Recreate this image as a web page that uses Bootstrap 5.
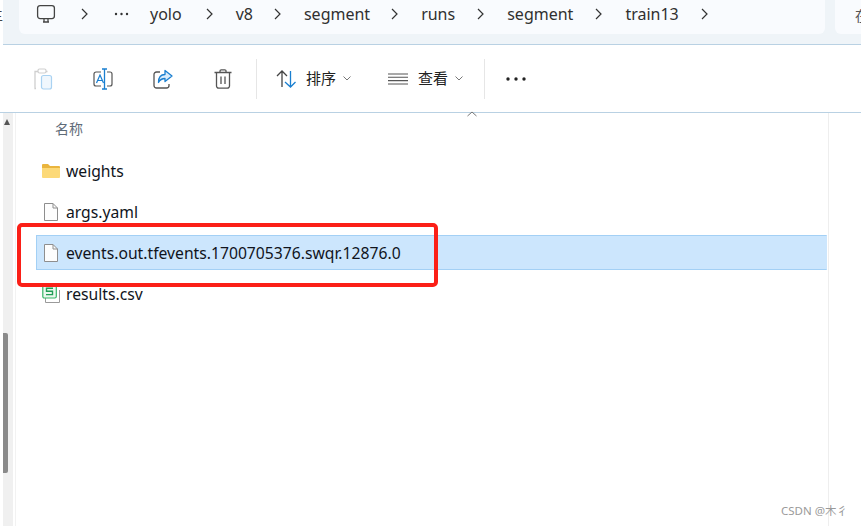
<!DOCTYPE html>
<html lang="zh-CN">
<head>
  <meta charset="UTF-8">
  <title>train13</title>
  <link rel="stylesheet" href="https://cdn.jsdelivr.net/npm/bootstrap@5.3.0/dist/css/bootstrap.min.css">
  <style>
    html, body {
      height: 100%;
      overflow: hidden;
    }

    body {
      position: relative;
      background: #fff;
      color: #1a1a1a;
      font-family: "Noto Sans", "Noto Sans CJK SC", sans-serif;
      font-size: 15.7px;
    }

    .addr-bar {
      height: 45px;
      margin-left: 3px;
      padding-left: 16px;
      background: #eff4f8;
      border-bottom: 1px solid #b9d1e3;
    }

    .addr-crumbs {
      flex: none;
      width: 806px;
      height: 34px;
      padding-left: 17px;
      padding-bottom: 6px;
      gap: 22px;
      background: #f9fbfe;
      border-radius: 0 0 6px 6px;
      color: #303030;
      font-size: 16px;
    }

    .crumb-pc {
      margin-right: 3px;
    }

    .crumb-dots {
      margin-left: 3px;
      margin-right: -1px;
    }

    .crumb-yolo {
      margin-right: 2px;
    }

    .crumb-v8 {
      margin-right: -1px;
    }

    .crumb-seg {
      margin-right: -1px;
    }

    .addr-search {
      height: 34px;
      margin-left: 10px;
      padding-left: 20px;
      padding-bottom: 4px;
      background: #f9fbfe;
      border-radius: 0 0 0 6px;
      overflow: hidden;
      color: #555;
      font-size: 14px;
      white-space: nowrap;
    }

    .tool-bar {
      height: 68px;
      padding-left: 13px;
      border-bottom: 1px solid #b9d1e3;
      font-size: 15px;
    }

    .tool-btn {
      width: 60px;
    }

    .tool-sep {
      flex: none;
      width: 1px;
      height: 40px;
      background: #e6e6e6;
    }

    .sep-first {
      margin-left: 3px;
      margin-right: 19px;
    }

    .sep-last {
      margin-left: 21px;
      margin-right: 21px;
    }

    .tool-menu {
      gap: 10px;
      color: #222;
    }

    .tool-menu + .tool-menu {
      margin-left: 37px;
    }

    .menu-caret {
      margin-left: -3px;
    }

    .main-wrap {
      height: 413px;
      padding-left: 3px;
    }

    .scroll-track {
      width: 10px;
      background: #f0f0f0;
    }

    .scroll-arrow {
      margin-top: 6px;
      margin-left: 1px;
      width: 0;
      height: 0;
      border-left: 3px solid transparent;
      border-right: 3px solid transparent;
      border-bottom: 6px solid #555;
    }

    .scroll-thumb {
      width: 5px;
      height: 140px;
      margin-top: 208px;
      background: #8a8a8a;
      border-radius: 0 2px 2px 0;
    }

    .file-pane {
      width: 814px;
      margin-left: 2px;
      border-left: 1px solid #f2f2f2;
      border-right: 1px solid #eee;
    }

    .sort-caret {
      top: -2px;
      left: 451px;
    }

    .col-name {
      height: 30px;
      padding-left: 39px;
      color: #5f6b78;
      font-size: 14px;
    }

    .col-name + .file-row {
      margin-top: 10px;
    }

    .file-row {
      height: 35px;
      margin-top: 6px;
      margin-left: 20px;
      margin-right: 1px;
      padding-left: 5px;
      gap: 6px;
      border: 1px solid transparent;
      color: #10141c;
    }

    .file-row.is-picked {
      background: #cce6fd;
      border-top-color: #a3d0f5;
      border-bottom-color: #a3d0f5;
      border-left-color: #a3d0f5;
    }

    .file-row svg {
      flex: none;
    }

    .file-name {
      padding-top: 2px;
    }

    .red-mark {
      top: 223px;
      left: 17px;
      width: 421px;
      height: 64px;
      border: 4px solid #fb1f17;
      border-radius: 5px;
    }

    .page-mark {
      right: 13px;
      bottom: 10px;
      color: #9a9a9a;
      font-size: 11.5px;
      line-height: 1;
    }

    .edge-char {
      top: 4px;
      left: -11px;
      color: #444;
      font-size: 14px;
    }
  </style>
</head>
<body>

<span class="edge-char position-absolute">主</span>

<div class="addr-bar d-flex">
  <div class="addr-crumbs d-flex align-items-center">
    <svg class="crumb-pc" width="20" height="20" viewBox="0 0 20 20" fill="none" stroke="#444" stroke-width="1.3">
      <rect x="1.6" y="1.6" width="16.8" height="13" rx="2.5"/>
      <path d="M7 18h6M8 15v3M12 15v3"/>
    </svg>
    <svg width="8" height="12" viewBox="0 0 8 12" fill="none" stroke="#333" stroke-width="1.2"><path d="M1 1l5 5-5 5"/></svg>
    <svg class="crumb-dots" width="15" height="4" viewBox="0 0 15 4" fill="#333"><circle cx="2" cy="2" r="1.2"/><circle cx="7.5" cy="2" r="1.2"/><circle cx="13" cy="2" r="1.2"/></svg>
    <span class="crumb-yolo">yolo</span>
    <svg width="8" height="12" viewBox="0 0 8 12" fill="none" stroke="#333" stroke-width="1.2"><path d="M1 1l5 5-5 5"/></svg>
    <span class="crumb-v8">v8</span>
    <svg width="8" height="12" viewBox="0 0 8 12" fill="none" stroke="#333" stroke-width="1.2"><path d="M1 1l5 5-5 5"/></svg>
    <span class="crumb-seg">segment</span>
    <svg width="8" height="12" viewBox="0 0 8 12" fill="none" stroke="#333" stroke-width="1.2"><path d="M1 1l5 5-5 5"/></svg>
    <span>runs</span>
    <svg width="8" height="12" viewBox="0 0 8 12" fill="none" stroke="#333" stroke-width="1.2"><path d="M1 1l5 5-5 5"/></svg>
    <span>segment</span>
    <svg width="8" height="12" viewBox="0 0 8 12" fill="none" stroke="#333" stroke-width="1.2"><path d="M1 1l5 5-5 5"/></svg>
    <span>train13</span>
    <svg width="8" height="12" viewBox="0 0 8 12" fill="none" stroke="#333" stroke-width="1.2"><path d="M1 1l5 5-5 5"/></svg>
  </div>
  <div class="addr-search d-flex align-items-center flex-grow-1">在</div>
</div>

<div class="tool-bar d-flex align-items-center">
  <div class="tool-btn d-flex justify-content-center">
    <svg width="20" height="22" viewBox="0 0 20 22" fill="none">
      <path d="M3 20.5h-1V3.5h3M13 3.5h1.500" stroke="#cfcfcf" stroke-width="1.300"/>
      <rect x="5" y="1" width="8" height="4" rx="1.500" stroke="#cfcfcf" stroke-width="1.200"/>
      <rect x="8.500" y="7.500" width="10" height="13.500" rx="2" fill="#f0f7fd" stroke="#a9d2f2" stroke-width="1.200"/>
    </svg>
  </div>
  <div class="tool-btn d-flex justify-content-center">
    <svg width="20" height="22" viewBox="0 0 20 22" fill="none">
      <path d="M8 4H3a2 2 0 0 0-2 2v10a2 2 0 0 0 2 2h5M14 4h3a2 2 0 0 1 2 2v10a2 2 0 0 1-2 2h-3" stroke="#555" stroke-width="1.200"/>
      <path d="M3.500 15L7 7l3.500 8M4.800 12.500h4.500" stroke="#1a7fd0" stroke-width="1.200"/>
      <path d="M9 1h5M9 21h5M11.500 1v20" stroke="#1a7fd0" stroke-width="1.300"/>
    </svg>
  </div>
  <div class="tool-btn d-flex justify-content-center">
    <svg width="20" height="20" viewBox="0 0 20 20" fill="none">
      <path d="M7 3H3.500A2.500 2.500 0 0 0 1 5.500v11A2.500 2.500 0 0 0 3.500 19h10a2.500 2.500 0 0 0 2.500-2.500V15" stroke="#555" stroke-width="1.300"/>
      <path d="M12 1.500L19 7l-7 5.500V9.500c-3 0-5 1-6.500 4 0-5 2.500-8 6.500-8z" fill="#d9ecfb" stroke="#1a7fd0" stroke-width="1.300" stroke-linejoin="round"/>
    </svg>
  </div>
  <div class="tool-btn d-flex justify-content-center">
    <svg width="18" height="20" viewBox="0 0 18 20" fill="none" stroke="#555" stroke-width="1.300">
      <path d="M0.500 3.500h17M6 3.500V2a1.200 1.200 0 0 1 1.200-1.200h3.600A1.200 1.200 0 0 1 12 2v1.500"/>
      <path d="M2.500 3.500V17a2.200 2.200 0 0 0 2.200 2.200h8.600A2.200 2.200 0 0 0 15.500 17V3.500"/>
      <path d="M7 7.500v7.500M11 7.500v7.500"/>
    </svg>
  </div>
  <div class="tool-sep sep-first"></div>
  <div class="tool-menu d-flex align-items-center">
    <svg width="20" height="18" viewBox="0 0 20 18" fill="none" stroke-width="1.300">
      <path d="M1 6l5-5 5 5M6 1v16" stroke="#444"/>
      <path d="M9 12l5.500 5 5-5M14.500 1v16" stroke="#1a7fd0"/>
    </svg>
    <span>排序</span>
    <svg class="menu-caret" width="8" height="5" viewBox="0 0 8 5" fill="none" stroke="#777"><path d="M.5.500L4 4 7.500.500"/></svg>
  </div>
  <div class="tool-menu d-flex align-items-center">
    <svg width="20" height="12" viewBox="0 0 20 12" fill="none" stroke="#555" stroke-width="1.100"><path d="M0 1h20M0 4.300h20M0 7.600h20M0 11h20"/></svg>
    <span>查看</span>
    <svg class="menu-caret" width="8" height="5" viewBox="0 0 8 5" fill="none" stroke="#777"><path d="M.5.500L4 4 7.500.500"/></svg>
  </div>
  <div class="tool-sep sep-last"></div>
  <svg width="20" height="4" viewBox="0 0 20 4" fill="#222"><circle cx="2" cy="2" r="1.700"/><circle cx="10" cy="2" r="1.700"/><circle cx="18" cy="2" r="1.700"/></svg>
</div>

<div class="main-wrap d-flex">
  <div class="scroll-track">
    <div class="scroll-arrow"></div>
    <div class="scroll-thumb"></div>
  </div>
  <div class="file-pane position-relative">
    <svg class="sort-caret position-absolute" width="10" height="6" viewBox="0 0 10 6" fill="none" stroke="#777"><path d="M.5 5L5 1l4.500 4"/></svg>
    <div class="col-name d-flex align-items-center">名称</div>

    <div class="file-row d-flex align-items-center">
      <svg width="18" height="16" viewBox="0 0 18 16">
        <path d="M0 2a1 1 0 0 1 1-1h5l2 2h9a1 1 0 0 1 1 1v2H0z" fill="#eab53e"/>
        <path d="M0 5h18v9a1 1 0 0 1-1 1H1a1 1 0 0 1-1-1z" fill="#fcd978"/>
      </svg>
      <span class="file-name">weights</span>
    </div>

    <div class="file-row d-flex align-items-center">
      <svg width="18" height="20" viewBox="0 0 18 20" fill="#fdfdfd" stroke="#8e8e8e">
        <path d="M2.500 1.500h8.500l4.500 4.500v12.500h-13z"/><path d="M11 1.500V6h4.500" fill="none"/>
      </svg>
      <span class="file-name">args.yaml</span>
    </div>

    <div class="file-row is-picked d-flex align-items-center">
      <svg width="18" height="20" viewBox="0 0 18 20" fill="#fdfdfd" stroke="#8e8e8e">
        <path d="M2.500 1.500h8.500l4.500 4.500v12.500h-13z"/><path d="M11 1.500V6h4.500" fill="none"/>
      </svg>
      <span class="file-name">events.out.tfevents.1700705376.swqr.12876.0</span>
    </div>

    <div class="file-row d-flex align-items-center">
      <svg width="18" height="20" viewBox="0 0 18 20" fill="none">
        <path d="M3.500 14v4.500h14V6" stroke="#9a9a9a"/>
        <rect x="0.800" y="1" width="13.500" height="13" rx="1.500" fill="#eaf8ee" stroke="#35b567" stroke-width="1.200"/>
        <path d="M11 4.300H4.500v3h6v3.300H4" stroke="#1f9d55" stroke-width="1.400"/>
      </svg>
      <span class="file-name">results.csv</span>
    </div>
  </div>
</div>

<div class="red-mark position-absolute"></div>
<div class="page-mark position-absolute">CSDN @木彳</div>

</body>
</html>
